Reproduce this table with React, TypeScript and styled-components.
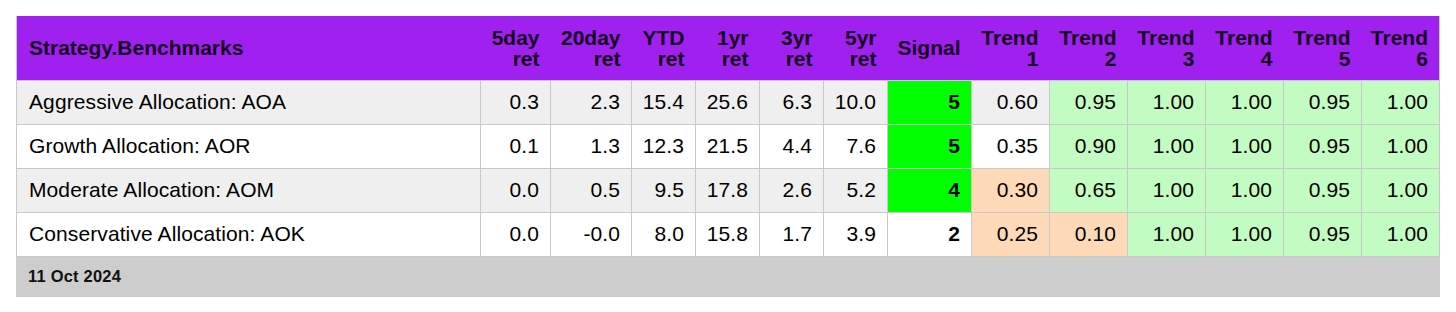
import styled, { createGlobalStyle } from "styled-components";

const GlobalStyle = createGlobalStyle`
  body {
    margin: 0;
    background: #fff;
    font-family: "Liberation Sans", Arial, sans-serif;
  }
`;

const Page = styled.div`
  padding: 16px;
`;

const Panel = styled.div`
  width: 1424px;
`;

const Table = styled.table`
  width: 100%;
  table-layout: fixed;
  border-collapse: collapse;
  border-left: 1px solid #c8c8c8;
  border-right: 1px solid #c8c8c8;
`;

const HeadRow = styled.tr`
  background: #a020f0;
  height: 64px;
`;

const HeadCell = styled.th<{ $left?: boolean }>`
  padding: 0 ${(p) => (p.$left ? "0 0 12px" : "11px 0 0")};
  text-align: ${(p) => (p.$left ? "left" : "right")};
  font-size: 21px;
  font-weight: bold;
  line-height: 21px;
  color: #150020;
  vertical-align: middle;
`;

const Row = styled.tr<{ $shade: boolean }>`
  height: 44px;
  background: ${(p) => (p.$shade ? "#efefef" : "#ffffff")};
`;

type Tone = "plain" | "good" | "weak" | "signal";

const toneColor: Record<Tone, string> = {
  plain: "transparent",
  good: "#c3fcc3",
  weak: "#fdd9b8",
  signal: "#00ff00",
};

const Cell = styled.td<{ $left?: boolean; $tone?: Tone; $bold?: boolean }>`
  border: 1px solid #c8c8c8;
  padding: ${(p) => (p.$left ? "0 0 0 12px" : "0 11px 0 0")};
  text-align: ${(p) => (p.$left ? "left" : "right")};
  background: ${(p) => toneColor[p.$tone ?? "plain"]};
  font-size: 21px;
  font-weight: ${(p) => (p.$bold ? "bold" : "normal")};
  letter-spacing: 0.1px;
  color: #000;
  white-space: nowrap;
`;

const Footer = styled.div`
  height: 40px;
  display: flex;
  align-items: center;
  padding-left: 12px;
  background: #cdcdcd;
  font-size: 16.5px;
  font-weight: bold;
  letter-spacing: 0.2px;
  color: #111;
`;

const widths = [464, 70, 81, 64, 64, 64, 64, 84, 78, 78, 78, 78, 78, 78];

const headers: [string, string?][] = [
  ["5day", "ret"],
  ["20day", "ret"],
  ["YTD", "ret"],
  ["1yr", "ret"],
  ["3yr", "ret"],
  ["5yr", "ret"],
  ["Signal"],
  ["Trend", "1"],
  ["Trend", "2"],
  ["Trend", "3"],
  ["Trend", "4"],
  ["Trend", "5"],
  ["Trend", "6"],
];

const rows = [
  { name: "Aggressive Allocation: AOA", rets: ["0.3", "2.3", "15.4", "25.6", "6.3", "10.0"], signal: 5, trends: [0.6, 0.95, 1, 1, 0.95, 1] },
  { name: "Growth Allocation: AOR", rets: ["0.1", "1.3", "12.3", "21.5", "4.4", "7.6"], signal: 5, trends: [0.35, 0.9, 1, 1, 0.95, 1] },
  { name: "Moderate Allocation: AOM", rets: ["0.0", "0.5", "9.5", "17.8", "2.6", "5.2"], signal: 4, trends: [0.3, 0.65, 1, 1, 0.95, 1] },
  { name: "Conservative Allocation: AOK", rets: ["0.0", "-0.0", "8.0", "15.8", "1.7", "3.9"], signal: 2, trends: [0.25, 0.1, 1, 1, 0.95, 1] },
];

function trendTone(v: number): Tone {
  if (v >= 0.65) return "good";
  if (v <= 0.3) return "weak";
  return "plain";
}

export default function App() {
  return (
    <Page>
      <GlobalStyle />
      <Panel>
        <Table>
          <colgroup>
            {widths.map((w, i) => (
              <col key={i} style={{ width: w }} />
            ))}
          </colgroup>
          <thead>
            <HeadRow>
              <HeadCell $left>Strategy.Benchmarks</HeadCell>
              {headers.map(([a, b], i) => (
                <HeadCell key={i}>
                  {a}
                  {b && (
                    <>
                      <br />
                      {b}
                    </>
                  )}
                </HeadCell>
              ))}
            </HeadRow>
          </thead>
          <tbody>
            {rows.map((r, i) => (
              <Row key={r.name} $shade={i % 2 === 0}>
                <Cell $left>{r.name}</Cell>
                {r.rets.map((v, j) => (
                  <Cell key={j}>{v}</Cell>
                ))}
                <Cell $bold $tone={r.signal >= 4 ? "signal" : "plain"}>
                  {r.signal}
                </Cell>
                {r.trends.map((t, j) => (
                  <Cell key={j} $tone={trendTone(t)}>
                    {t.toFixed(2)}
                  </Cell>
                ))}
              </Row>
            ))}
          </tbody>
        </Table>
        <Footer>11 Oct 2024</Footer>
      </Panel>
    </Page>
  );
}
